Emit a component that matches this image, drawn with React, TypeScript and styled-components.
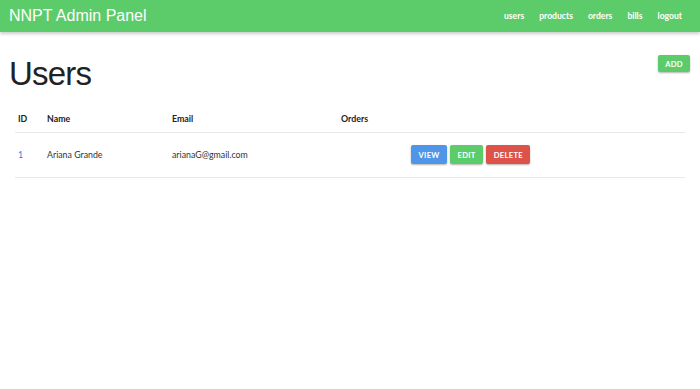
import React from "react";
import styled, { createGlobalStyle } from "styled-components";

const Global = createGlobalStyle`
  html, body { margin: 0; padding: 0; background: #fff; }
  body { font-family: Lato, "Liberation Sans", sans-serif; color: #222; }
  * { box-sizing: border-box; }
`;

const Header = styled.header`
  height: 32px;
  background: #5ccc6a;
  display: flex;
  align-items: center;
  justify-content: space-between;
  padding: 0 18px 0 9px;
  box-shadow: 0 2px 3px rgba(0, 0, 0, 0.2);
`;

const Brand = styled.div`
  color: #fff;
  font-family: "Liberation Sans", Arial, sans-serif;
  font-size: 16px;
`;

const Nav = styled.nav`
  display: flex;
  gap: 15px;
`;

const NavLink = styled.a`
  color: #fff;
  font-family: Lato, "Liberation Sans", sans-serif;
  font-size: 8.6px;
  font-weight: 700;
  text-decoration: none;
`;

const Main = styled.main`
  padding: 0 10px 0 9px;
`;

const TitleRow = styled.div`
  display: flex;
  justify-content: space-between;
  align-items: flex-start;
  padding-top: 23px;
`;

const Title = styled.h1`
  margin: 0;
  font-family: "Liberation Sans", Arial, sans-serif;
  font-weight: 400;
  font-size: 33px;
  letter-spacing: -0.8px;
  line-height: 38px;
  color: #222;
`;

const Button = styled.button<{ $color: string }>`
  border: none;
  background: ${(p) => p.$color};
  color: #fff;
  font-family: Lato, "Liberation Sans", sans-serif;
  font-size: 7.6px;
  font-weight: 700;
  letter-spacing: 0.3px;
  height: 19px;
  padding: 0 7.5px;
  border-radius: 2px;
  box-shadow: 0 1px 2px rgba(0, 0, 0, 0.3);
  cursor: pointer;
`;

const AddButton = styled(Button)`
  height: 17px;
  margin-top: 0;
  width: 32px;
  padding: 0;
`;

const Table = styled.table`
  width: 670px;
  margin: 13px 0 0 6px;
  border-collapse: collapse;
  font-size: 8.8px;
`;

const Th = styled.th<{ $w?: number }>`
  text-align: left;
  font-weight: 700;
  color: #222;
  padding: 0 3px;
  height: 26px;
  border-bottom: 1px solid #e8e8e8;
  ${(p) => (p.$w ? `width: ${p.$w}px;` : "")}
`;

const Td = styled.td<{ $link?: boolean }>`
  padding: 0 3px;
  height: 45px;
  color: ${(p) => (p.$link ? "#2a84e0" : "#333")};
  border-bottom: 1px solid #e8e8e8;
`;

const Actions = styled.div`
  display: flex;
  gap: 3px;
  padding-left: 70px;
`;

export default function App() {
  return (
    <>
      <Global />
      <Header>
        <Brand>NNPT Admin Panel</Brand>
        <Nav>
          <NavLink>users</NavLink>
          <NavLink>products</NavLink>
          <NavLink>orders</NavLink>
          <NavLink>bills</NavLink>
          <NavLink>logout</NavLink>
        </Nav>
      </Header>
      <Main>
        <TitleRow>
          <Title>Users</Title>
          <AddButton $color="#5ccc6a">ADD</AddButton>
        </TitleRow>
        <Table>
          <thead>
            <tr>
              <Th $w={29}>ID</Th>
              <Th $w={125}>Name</Th>
              <Th $w={169}>Email</Th>
              <Th>Orders</Th>
            </tr>
          </thead>
          <tbody>
            <tr>
              <Td $link>1</Td>
              <Td>Ariana Grande</Td>
              <Td>arianaG@gmail.com</Td>
              <Td>
                <Actions>
                  <Button $color="#4f95e8">VIEW</Button>
                  <Button $color="#5ccc6a">EDIT</Button>
                  <Button $color="#dd5349">DELETE</Button>
                </Actions>
              </Td>
            </tr>
          </tbody>
        </Table>
      </Main>
    </>
  );
}
